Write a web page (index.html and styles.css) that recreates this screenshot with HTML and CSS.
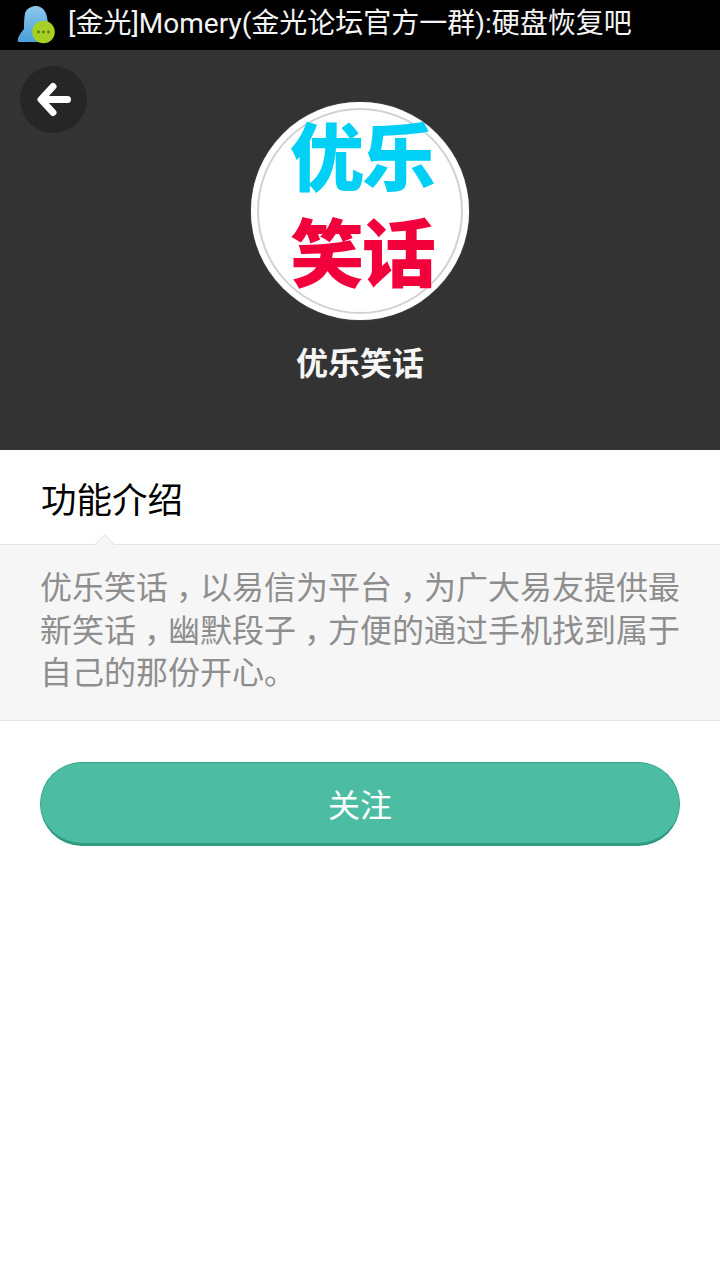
FILE: index.html
```html
<!DOCTYPE html>
<html lang="zh">
<head>
<meta charset="utf-8">
<title>优乐笑话</title>
<link rel="stylesheet" href="styles.css">
</head>
<body>
<div class="status">
  <svg class="qq" width="40" height="44" viewBox="0 0 40 44">
    <defs><linearGradient id="qqBlue" x1="0" y1="0" x2="0" y2="1"><stop offset="0" stop-color="#8cc8ee"/><stop offset="1" stop-color="#4a9fd8"/></linearGradient></defs>
    <path d="M2 40 C1 36 4 32 8 27 C8 22 8 17 9 11 C11 6 16 4 20 4 C26 4 30 9 31 15 L33 27 L33 40 Z" fill="url(#qqBlue)"/>
    <circle cx="27.5" cy="30" r="11.3" fill="#a6d024"/>
    <circle cx="22.5" cy="30" r="1.4" fill="#5c7a18"/>
    <circle cx="27.5" cy="30" r="1.4" fill="#5c7a18"/>
    <circle cx="32.5" cy="30" r="1.4" fill="#5c7a18"/>
  </svg>
  <span class="status-text">[金光]Momery(金光论坛官方一群):硬盘恢复吧</span>
</div>
<header class="hero">
  <button class="back" aria-label="返回">
    <svg width="36" height="36" viewBox="0 0 36 36"><path d="M6 17.5 H31.5 M17 4.5 L5 17.5 L17 30.5" fill="none" stroke="#fff" stroke-width="7" stroke-linecap="round" stroke-linejoin="round"/></svg>
  </button>
  <div class="logo">
    <div class="logo-inner">
      <span class="logo-line blue">优乐</span>
      <span class="logo-line red">笑话</span>
    </div>
  </div>
  <h1 class="name">优乐笑话</h1>
</header>
<h2 class="section-title">功能介绍</h2>
<section class="intro">
  <span class="notch"></span>
  <p>优乐笑话<span class="comma">，</span>以易信为平台<span class="comma">，</span>为广大易友提供最新笑话<span class="comma">，</span>幽默段子<span class="comma">，</span>方便的通过手机找到属于自己的那份开心。</p>
</section>
<div class="action"><button class="follow">关注</button></div>
</body>
</html>
```
FILE: styles.css
```css
* { box-sizing: border-box; }
html, body { margin: 0; padding: 0; background: #fff; }
body { width: 720px; height: 1280px; overflow: hidden; font-family: "Noto Sans CJK SC", "Liberation Sans", sans-serif; }
.status { height: 50px; background: #000; display: flex; align-items: center; padding-left: 16px; gap: 13px; }
.qq { flex: none; margin-top: -2px; }
.status-text { font-family: "Roboto", "Noto Sans CJK SC", sans-serif; color: #f4f4f4; font-size: 28px; line-height: 46px; white-space: nowrap; margin-left: -1px; margin-top: -2px; }
.hero { position: relative; height: 400px; background: #333; display: flex; flex-direction: column; align-items: center; padding-top: 52px; }
.back { position: absolute; left: 20px; top: 16px; width: 67px; height: 67px; border: 0; padding: 0 0 0 1px; border-radius: 50%; background: #262626; display: flex; align-items: center; justify-content: center; }
.logo { width: 218px; height: 218px; border-radius: 50%; background: #fff; padding: 6px; flex: none; box-shadow: 0 0 1px #bbb; }
.logo-inner { width: 206px; height: 206px; border-radius: 50%; border: 2px solid #d2d2d2; display: flex; flex-direction: column; align-items: center; padding-left: 4px; }
.logo-line { font-size: 74px; font-weight: 900; line-height: 96px; letter-spacing: -2px; white-space: nowrap; }
.blue { color: #00d0f5; margin-top: -5px; }
.red { color: #f2003c; }
.name { margin: 18px 0 0; font-size: 32px; line-height: 46px; font-weight: 700; color: #f6f6f6; }
.section-title { margin: 0; height: 94px; font-size: 35.5px; font-weight: 400; line-height: 95px; padding-left: 41px; color: #000; }
.intro { position: relative; background: #f6f6f6; border-top: 1px solid #e4e4e4; border-bottom: 1px solid #e4e4e4; padding: 19px 36px 27px 40px; height: 177px; }
.intro p { margin: 0; font-size: 32px; line-height: 42.5px; color: #8e8e8e; }
.comma { display: inline-block; width: 1em; text-align: center; font-feature-settings: "halt"; }
.notch { position: absolute; left: 97px; top: -8px; width: 15px; height: 15px; background: #f6f6f6; border-top: 1px solid #e4e4e4; border-left: 1px solid #e4e4e4; transform: rotate(45deg); border-top-left-radius: 3px; }
.action { padding: 41px 40px 0; }
.follow { display: block; width: 640px; height: 84px; border-radius: 42px; border: 1px solid #36a488; border-bottom: 3px solid #2f9a80; background: #4cbda3; color: #fff; font-family: inherit; font-size: 32px; padding: 0; }
```
